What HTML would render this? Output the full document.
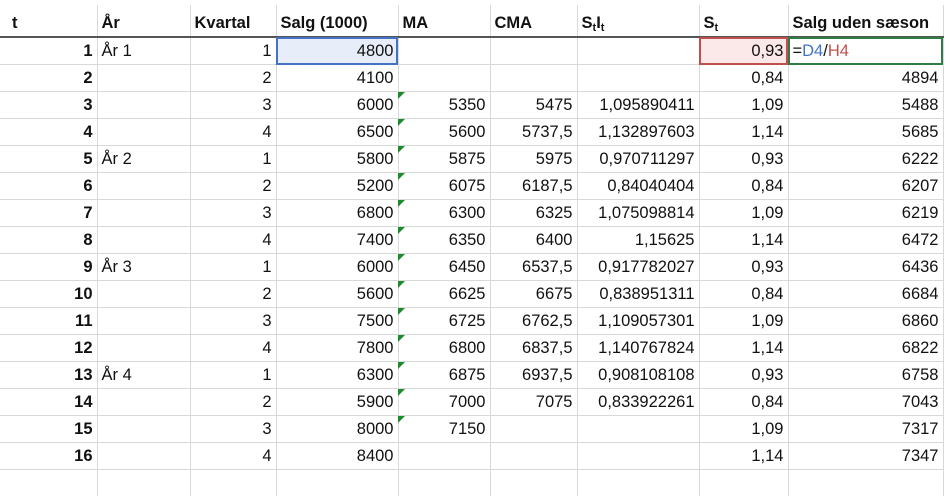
<!DOCTYPE html><html><head><style>
body{margin:0;background:#fff;width:951px;height:478px;overflow:hidden;position:relative;font-family:"Liberation Sans",Arial,sans-serif;font-size:16.5px;color:#111}
table{position:absolute;left:0;top:5px;border-collapse:collapse;table-layout:fixed}
td{height:26px;border-right:1px solid #d8d8d8;border-bottom:1px solid #d8d8d8;padding:0 4px;text-align:right;white-space:nowrap;overflow:visible;position:relative;line-height:26px}
tr.h td{font-weight:bold;text-align:left;border-bottom:2px solid #555;height:28px;line-height:20px;vertical-align:bottom;padding-bottom:3px}
td.b{font-weight:bold}
td.l{text-align:left}
.g::before{content:"";position:absolute;left:-1px;top:0;border-top:7px solid #1e8a2e;border-right:7px solid transparent}
sub{font-size:11px;vertical-align:-3px;line-height:0}
</style></head><body>
<table>
<colgroup><col style="width:97px"><col style="width:93px"><col style="width:86px"><col style="width:122px"><col style="width:92px"><col style="width:87px"><col style="width:122px"><col style="width:89px"><col style="width:155px"></colgroup>
<tr class="h"><td style="padding-left:12px">t</td><td>År</td><td>Kvartal</td><td>Salg (1000)</td><td>MA</td><td>CMA</td><td>S<sub>t</sub>I<sub>t</sub></td><td>S<sub>t</sub></td><td>Salg uden sæson</td></tr>
<tr><td class="b">1</td><td class="l">År 1</td><td>1</td><td style="background:#e8eef9;outline:2px solid #4472c4;outline-offset:-2px">4800</td><td></td><td></td><td></td><td style="background:#fbe8e8;outline:2px solid #c0504d;outline-offset:-2px">0,93</td><td class="l" style="outline:2px solid #2e7d46;outline-offset:-2px">=<span style="color:#4472c4">D4</span>/<span style="color:#c0504d">H4</span></td></tr>
<tr><td class="b">2</td><td></td><td>2</td><td>4100</td><td></td><td></td><td></td><td>0,84</td><td>4894</td></tr>
<tr><td class="b">3</td><td></td><td>3</td><td>6000</td><td class="g">5350</td><td>5475</td><td>1,095890411</td><td>1,09</td><td>5488</td></tr>
<tr><td class="b">4</td><td></td><td>4</td><td>6500</td><td class="g">5600</td><td>5737,5</td><td>1,132897603</td><td>1,14</td><td>5685</td></tr>
<tr><td class="b">5</td><td class="l">År 2</td><td>1</td><td>5800</td><td class="g">5875</td><td>5975</td><td>0,970711297</td><td>0,93</td><td>6222</td></tr>
<tr><td class="b">6</td><td></td><td>2</td><td>5200</td><td class="g">6075</td><td>6187,5</td><td>0,84040404</td><td>0,84</td><td>6207</td></tr>
<tr><td class="b">7</td><td></td><td>3</td><td>6800</td><td class="g">6300</td><td>6325</td><td>1,075098814</td><td>1,09</td><td>6219</td></tr>
<tr><td class="b">8</td><td></td><td>4</td><td>7400</td><td class="g">6350</td><td>6400</td><td>1,15625</td><td>1,14</td><td>6472</td></tr>
<tr><td class="b">9</td><td class="l">År 3</td><td>1</td><td>6000</td><td class="g">6450</td><td>6537,5</td><td>0,917782027</td><td>0,93</td><td>6436</td></tr>
<tr><td class="b">10</td><td></td><td>2</td><td>5600</td><td class="g">6625</td><td>6675</td><td>0,838951311</td><td>0,84</td><td>6684</td></tr>
<tr><td class="b">11</td><td></td><td>3</td><td>7500</td><td class="g">6725</td><td>6762,5</td><td>1,109057301</td><td>1,09</td><td>6860</td></tr>
<tr><td class="b">12</td><td></td><td>4</td><td>7800</td><td class="g">6800</td><td>6837,5</td><td>1,140767824</td><td>1,14</td><td>6822</td></tr>
<tr><td class="b">13</td><td class="l">År 4</td><td>1</td><td>6300</td><td class="g">6875</td><td>6937,5</td><td>0,908108108</td><td>0,93</td><td>6758</td></tr>
<tr><td class="b">14</td><td></td><td>2</td><td>5900</td><td class="g">7000</td><td>7075</td><td>0,833922261</td><td>0,84</td><td>7043</td></tr>
<tr><td class="b">15</td><td></td><td>3</td><td>8000</td><td class="g">7150</td><td></td><td></td><td>1,09</td><td>7317</td></tr>
<tr><td class="b">16</td><td></td><td>4</td><td>8400</td><td></td><td></td><td></td><td>1,14</td><td>7347</td></tr>
<tr><td style="border-bottom:none;height:10px"></td><td style="border-bottom:none"></td><td style="border-bottom:none"></td><td style="border-bottom:none"></td><td style="border-bottom:none"></td><td style="border-bottom:none"></td><td style="border-bottom:none"></td><td style="border-bottom:none"></td><td style="border-bottom:none"></td></tr>
</table>
</body></html>
